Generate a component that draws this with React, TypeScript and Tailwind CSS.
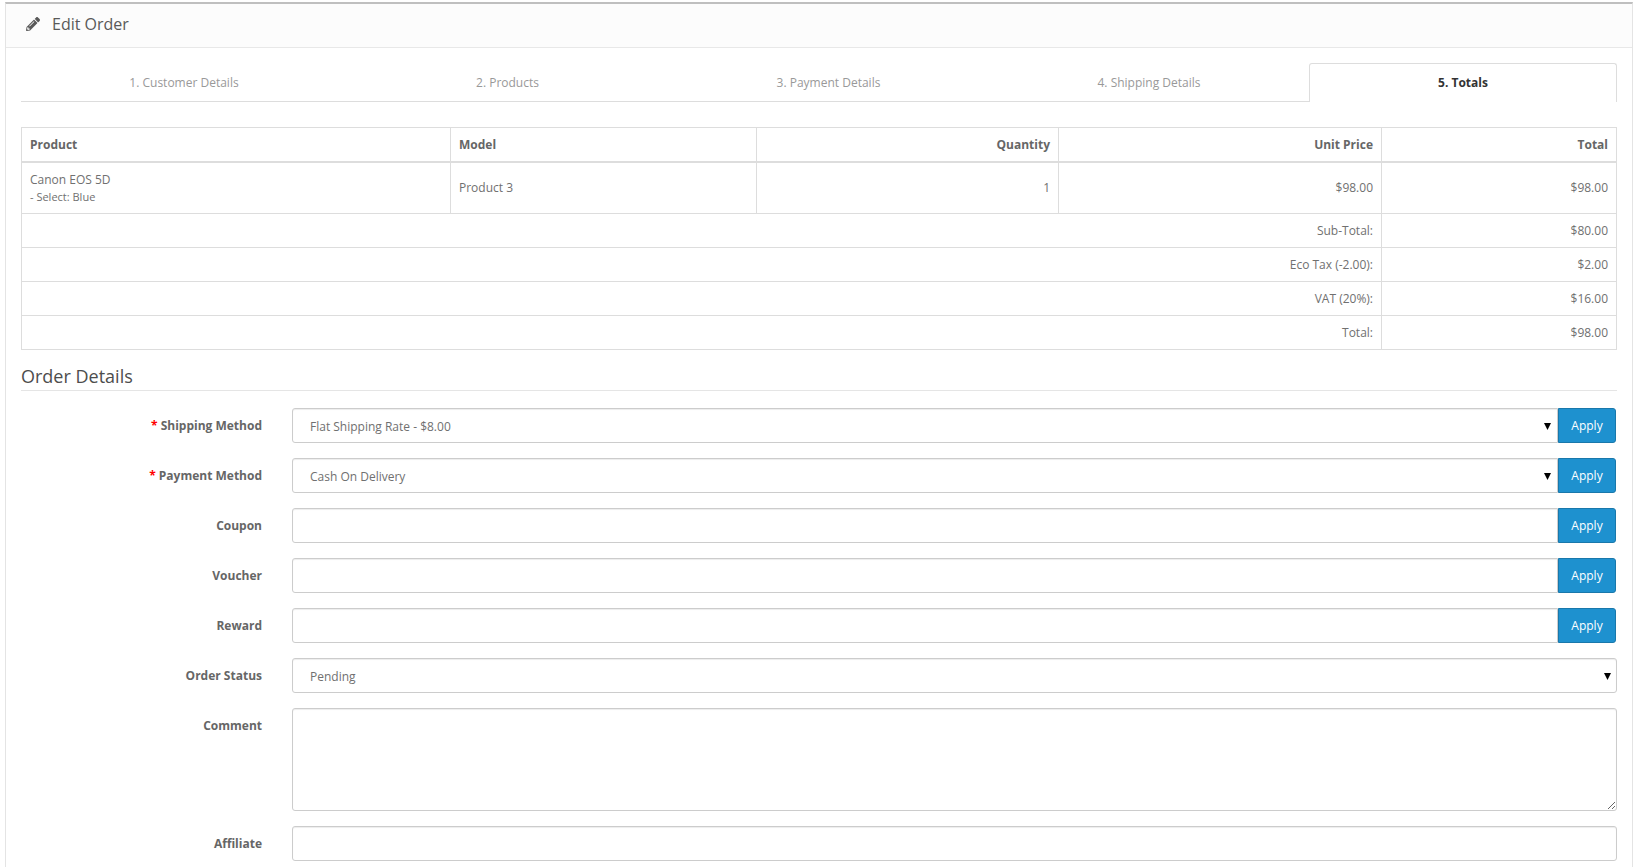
import { FaPencilAlt } from "react-icons/fa"

const tabs = [
    { label: "1. Customer Details", width: "w-[324px]", pad: "pl-[2px]" },
    { label: "2. Products", width: "w-[324px]", pad: "pl-[1px]" },
    { label: "3. Payment Details", width: "w-[318px]", pad: "pl-[1px]" },
    { label: "4. Shipping Details", width: "w-[322px]", pad: "pl-[2px]" },
]

const totals = [
    ["Sub-Total:", "$80.00"],
    ["Eco Tax (-2.00):", "$2.00"],
    ["VAT (20%):", "$16.00"],
    ["Total:", "$98.00"],
]

function Field({ label, required, value, select, apply }: { label: string; required?: boolean; value?: string; select?: boolean; apply?: boolean }) {
    return (
        <div className="flex mb-[15px]">
            <label className="w-[241px] pt-[9px] text-right font-bold leading-[18px] text-[#666]">
                {required && <span className="text-[#f00]">* </span>}
                {label}
            </label>
            <div className="flex flex-1 ml-[30px]">
                <div className={`relative flex-1 h-[35px] border border-[#ccc] bg-white px-[17px] leading-[35px] text-[#707070] shadow-[inset_0_1px_1px_rgba(0,0,0,0.075)] ${apply ? "rounded-l-[3px]" : "rounded-[3px]"}`}>
                    {value}
                    {select && (
                        <svg className={`absolute top-[14px] ${apply ? "right-[6px]" : "right-[5px]"}`} width="7" height="7" viewBox="0 0 7 7">
                            <path d="M0 0h7L3.5 7z" fill="#000" />
                        </svg>
                    )}
                </div>
                {apply && (
                    <button className="w-[58px] h-[35px] mr-[1px] rounded-r-[3px] border border-[#1978ab] bg-[#1e91cf] text-white">Apply</button>
                )}
            </div>
        </div>
    )
}

export default function App() {
    return (
        <div className="h-[867px] overflow-hidden bg-white pt-[2px] pl-[5px] pr-[4px] text-[12px] text-[#707070] font-['Open_Sans',sans-serif]">
            <div className="h-[900px] border-x border-[#e4e4e4] border-t-2 border-t-[#bfbfbf]">
                <div className="flex items-center h-[44px] bg-[#fcfcfc] border-b border-[#e8e8e8] pl-[20px] pb-[3px] text-[#595959]">
                    <FaPencilAlt size={14} />
                    <h3 className="ml-[12px] text-[16px]">Edit Order</h3>
                </div>
                <div className="px-[15px] pt-[15px]">
                    <div className="flex h-[39px]">
                        {tabs.map((t) => (
                            <div key={t.label} className={`${t.width} ${t.pad} border-b border-[#ddd] text-center leading-[39px] text-[#999]`}>{t.label}</div>
                        ))}
                        <div className="w-[308px] rounded-t-[3px] border border-b-0 border-[#ddd] text-center font-bold leading-[37px] text-[#333]">5. Totals</div>
                    </div>

                    <table className="mt-[25px] w-[1595px] table-fixed border-collapse">
                        <colgroup>
                            <col className="w-[429px]" />
                            <col className="w-[306px]" />
                            <col className="w-[302px]" />
                            <col className="w-[323px]" />
                            <col className="w-[235px]" />
                        </colgroup>
                        <thead>
                            <tr className="h-[34px] font-bold text-[#666]">
                                <td className="border border-b-2 border-[#ddd] px-[8px] pt-[2px]">Product</td>
                                <td className="border border-b-2 border-[#ddd] px-[8px] pt-[2px]">Model</td>
                                <td className="border border-b-2 border-[#ddd] px-[8px] pt-[2px] text-right">Quantity</td>
                                <td className="border border-b-2 border-[#ddd] px-[8px] pt-[2px] text-right">Unit Price</td>
                                <td className="border border-b-2 border-[#ddd] px-[8px] pt-[2px] text-right">Total</td>
                            </tr>
                        </thead>
                        <tbody>
                            <tr className="h-[52px]">
                                <td className="border border-[#ddd] px-[8px] leading-[17px]">
                                    Canon EOS 5D
                                    <br />
                                    <small className="text-[11px]">- Select: Blue</small>
                                </td>
                                <td className="border border-[#ddd] px-[8px]">Product 3</td>
                                <td className="border border-[#ddd] px-[8px] text-right">1</td>
                                <td className="border border-[#ddd] px-[8px] text-right">$98.00</td>
                                <td className="border border-[#ddd] px-[8px] text-right">$98.00</td>
                            </tr>
                            {totals.map(([name, price]) => (
                                <tr key={name} className="h-[34px]">
                                    <td colSpan={4} className="border border-[#ddd] px-[8px] text-right">{name}</td>
                                    <td className="border border-[#ddd] px-[8px] text-right">{price}</td>
                                </tr>
                            ))}
                        </tbody>
                    </table>

                    <h4 className="mt-[14px] h-[27px] border-b border-[#e5e5e5] text-[18px] leading-[24px] text-[#4d4d4d]">Order Details</h4>

                    <div className="mt-[17px]">
                        <Field label="Shipping Method" required value="Flat Shipping Rate - $8.00" select apply />
                        <Field label="Payment Method" required value="Cash On Delivery" select apply />
                        <Field label="Coupon" apply />
                        <Field label="Voucher" apply />
                        <Field label="Reward" apply />
                        <Field label="Order Status" value="Pending" select />
                        <div className="flex mb-[15px]">
                            <label className="w-[241px] pt-[9px] text-right font-bold leading-[18px] text-[#666]">Comment</label>
                            <textarea className="ml-[30px] flex-1 h-[103px] rounded-[3px] border border-[#ccc] shadow-[inset_0_1px_1px_rgba(0,0,0,0.075)]" />
                        </div>
                        <Field label="Affiliate" />
                    </div>
                </div>
            </div>
        </div>
    )
}
